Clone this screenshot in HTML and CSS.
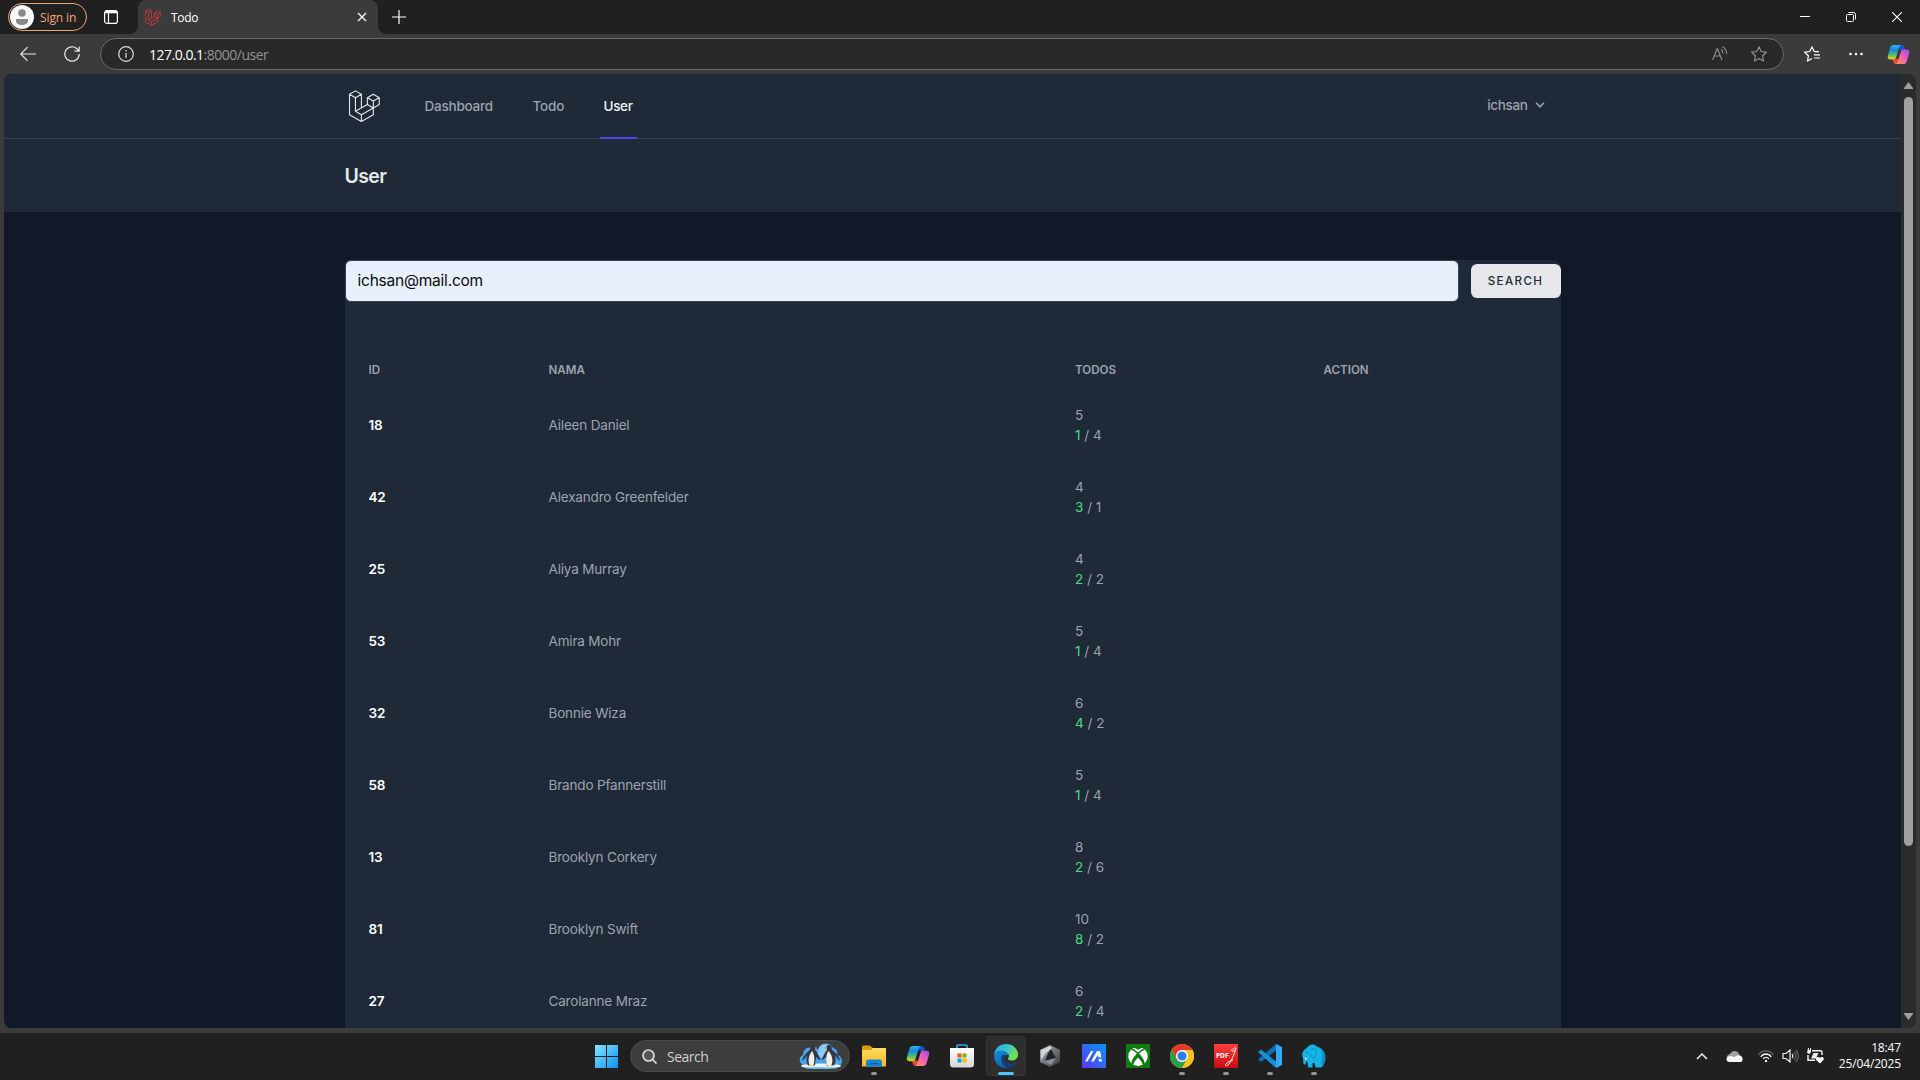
FILE: index.html
```html
<!DOCTYPE html>
<html lang="en">
<head>
<meta charset="utf-8">
<title>Todo</title>
<link rel="stylesheet" href="styles.css">
</head>
<body>
<svg class="defs" width="0" height="0" aria-hidden="true">
  <defs>
    <linearGradient id="cpA" x1="0" y1="0" x2="0" y2="1"><stop offset="0" stop-color="#22b4f5"/><stop offset=".35" stop-color="#1c87dc"/><stop offset=".65" stop-color="#43bd7c"/><stop offset="1" stop-color="#f8d000"/></linearGradient>
    <linearGradient id="cpB" x1="1" y1="0" x2="0" y2="1"><stop offset="0" stop-color="#a144ee"/><stop offset=".5" stop-color="#ee62ae"/><stop offset="1" stop-color="#ff9a57"/></linearGradient>
    <linearGradient id="win" gradientUnits="userSpaceOnUse" x1="0" y1="0" x2="23" y2="23"><stop offset="0" stop-color="#86e2ff"/><stop offset="1" stop-color="#0a93f5"/></linearGradient>
    <linearGradient id="folder" x1="0" y1="0" x2="0" y2="1"><stop offset="0" stop-color="#ffdc64"/><stop offset="1" stop-color="#f9b91e"/></linearGradient>
    <linearGradient id="bag" x1="0" y1="0" x2="0" y2="1"><stop offset="0" stop-color="#ffffff"/><stop offset="1" stop-color="#d6d6d6"/></linearGradient>
    <linearGradient id="edgeTop" x1="0" y1="0" x2="1" y2=".4"><stop offset="0" stop-color="#2aa6e4"/><stop offset=".55" stop-color="#35c5cf"/><stop offset="1" stop-color="#75e04b"/></linearGradient>
    <linearGradient id="edgeLow" x1="0" y1="0" x2="1" y2="1"><stop offset="0" stop-color="#168fe3"/><stop offset="1" stop-color="#0c4a8c"/></linearGradient>
    <linearGradient id="asus" x1="0" y1="1" x2="1" y2="0"><stop offset="0" stop-color="#5a35f6"/><stop offset="1" stop-color="#0898f8"/></linearGradient>
    <linearGradient id="pdf" x1="0" y1="0" x2="0" y2="1"><stop offset="0" stop-color="#ff3d42"/><stop offset="1" stop-color="#c80c10"/></linearGradient>
    <linearGradient id="steel" x1="0" y1="0" x2="1" y2="1"><stop offset="0" stop-color="#aeb2b8"/><stop offset="1" stop-color="#32363d"/></linearGradient>
    <symbol id="laravel" viewBox="0 0 50 52">
      <path fill="none" stroke="currentColor" stroke-linejoin="round" d="M.8 6.3 10.4.8 20 6.3 10.4 11.8ZM.8 6.3v32.9L20 50.2l19.2-11V28.3M10.4 11.8v22L20 39.4v10.8M20 6.3v22.1M10.4 33.8l19.2-11.1M20 39.4l19.2-11.1M29.6 11.8l9.6-5.5 9.6 5.5-9.6 5.5ZM29.6 11.8v10.9l9.6 5.6 9.6-5.6V11.8M39.2 17.3v11"/>
    </symbol>
    <symbol id="copilot" viewBox="0 0 24 22">
      <path fill="#1458c8" d="M10 1h5.500c1.500 0 2.200 1 2.700 2.400l1 3h-5z"/>
      <path fill="#e94a3c" d="M6 15.500h5.500l2 5.500H9.500c-1.700 0-2.300-1-2.700-2.500z"/>
      <path fill="url(#cpA)" d="M6.500 1H15c-1.200.2-1.800 1-2.200 2.400L9.500 14c-.5 1.500-1.300 2.200-3 2.200H3.300C1 16.200.3 14.500.9 12.300L3.300 4C4 1.800 5 1 6.500 1z"/>
      <path fill="url(#cpB)" d="M17.500 21H9c1.200-.2 1.800-1 2.200-2.400L14.500 8c.5-1.500 1.300-2.200 3-2.200h3.200c2.300 0 3 1.700 2.400 3.900L20.700 18c-.7 2.200-1.700 3-3.200 3z"/>
    </symbol>
  </defs>
</svg>

<div class="titlebar">
  <div class="signin">
    <svg width="24" height="24" viewBox="0 0 24 24"><circle cx="12" cy="12" r="12" fill="#f7f7f7"/><circle cx="12" cy="8" r="3.800" fill="#8a8a8a"/><path d="M6 14h12v1.500c0 3-2.500 4.500-6 4.500s-6-1.500-6-4.500z" fill="#8a8a8a"/></svg>
    <span>Sign in</span>
  </div>
  <svg class="workspaces" width="14" height="14" viewBox="0 0 14 14" fill="none" stroke="#fff" stroke-width="1.200"><rect x=".6" y=".6" width="12.800" height="12.800" rx="2.500"/><path d="M1 2h12" stroke-width="2.600"/><path d="M4.500 3v10"/></svg>
  <div class="tab">
    <svg class="favicon" width="16" height="17" stroke-width="3"><use href="#laravel"/></svg>
    <span class="tab-title">Todo</span>
    <svg width="10" height="10" viewBox="0 0 10 10" stroke="#fff" stroke-width="1.300"><path d="M1 1l8 8M9 1 1 9"/></svg>
  </div>
  <svg class="newtab" width="14" height="14" viewBox="0 0 14 14" stroke="#fff" stroke-width="1.200"><path d="M7 0v14M0 7h14"/></svg>
  <div class="window-controls">
    <svg width="10" height="10" viewBox="0 0 10 10" stroke="#fff"><path d="M0 4.500h10"/></svg>
    <svg width="10" height="10" viewBox="0 0 10 10" fill="none" stroke="#fff" stroke-width="1"><rect x=".5" y="2.500" width="7" height="7" rx="1"/><path d="M2.500.5H7.500a2 2 0 0 1 2 2V7.500"/></svg>
    <svg width="10" height="10" viewBox="0 0 10 10" stroke="#fff" stroke-width="1.100"><path d="M0 0l10 10M10 0 0 10"/></svg>
  </div>
</div>

<div class="toolbar">
  <svg class="back" width="16" height="16" viewBox="0 0 16 16" fill="none" stroke="#e8e8e8" stroke-width="1.200"><path d="M16 8H.8M7.500 1.200.8 8l6.700 6.800"/></svg>
  <svg class="reload" width="16" height="16" viewBox="0 0 16 16" fill="none" stroke="#e8e8e8" stroke-width="1.200"><path d="M15.200 8a7.200 7.200 0 1 1-2-5l1.700 2M15.200.5V5.200H10.500"/></svg>
  <div class="address">
    <svg width="16" height="16" viewBox="0 0 16 16" fill="none" stroke="#ddd" stroke-width="1.200"><circle cx="8" cy="8" r="7.300"/><path d="M8 7v5M8 4v1.500"/></svg>
    <span class="url">127.0.0.1<span class="url-path">:8000/user</span></span>
    <svg class="read-aloud" width="16" height="16" viewBox="0 0 16 16" fill="none" stroke="#8f8f8f" stroke-width="1.100"><path d="M.6 14 5.300 2.500 10 14M2.200 10h6.200M9.300 3.200c1 .8 1.600 2.200 1.700 4.300M10.500.8c2.500 1.200 4 3.700 4.200 7.200"/></svg>
    <svg width="16" height="16" viewBox="0 0 16 16" fill="none" stroke="#8f8f8f" stroke-width="1.200" stroke-linejoin="round"><path d="M8 .8l2.200 4.700 5.100.7-3.700 3.600.9 5.300L8 12.600l-4.500 2.500.9-5.300L.7 6.200l5.100-.7z"/></svg>
  </div>
  <svg class="favorites" width="16" height="16" viewBox="0 0 16 16" fill="none" stroke="#fff" stroke-width="1.200" stroke-linejoin="round"><path d="M15 5.700h-4.600L8 .9 5.700 5.500l-5 .7 3.700 3.600-.9 5.300L8 12.600M10 8.800h6M10 12h6"/></svg>
  <svg class="more" width="14" height="4" viewBox="0 0 14 4" fill="#fff"><circle cx="1.500" cy="2" r="1.300"/><circle cx="7" cy="2" r="1.300"/><circle cx="12.500" cy="2" r="1.300"/></svg>
  <svg width="23" height="21"><use href="#copilot"/></svg>
</div>

<div class="viewport">
  <div class="page">
    <nav class="nav">
      <div class="container nav-inner">
        <svg class="logo" width="31" height="33" stroke-width="1.800"><use href="#laravel"/></svg>
        <a class="nav-link nav-dashboard">Dashboard</a>
        <a class="nav-link nav-todo">Todo</a>
        <a class="nav-link nav-user active">User</a>
        <div class="account"><span>ichsan</span><svg width="10" height="6" viewBox="0 0 10 6" fill="none" stroke="#9ca3af" stroke-width="1.600"><path d="M1 .8l4 4 4-4"/></svg></div>
      </div>
    </nav>
    <header class="page-header"><div class="container"><h2>User</h2></div></header>
    <main class="container main">
      <div class="card">
        <form class="search-form">
          <div class="search-input">ichsan@mail.com</div>
          <div class="search-button">Search</div>
        </form>
        <table class="users">
          <thead><tr><th class="col-id">ID</th><th class="col-name">Nama</th><th class="col-todos">Todos</th><th>Action</th></tr></thead>
          <tbody>
            <tr><td class="id">18</td><td>Aileen Daniel</td><td><p>5</p><p><span class="done">1</span> / 4</p></td><td></td></tr>
            <tr><td class="id">42</td><td>Alexandro Greenfelder</td><td><p>4</p><p><span class="done">3</span> / 1</p></td><td></td></tr>
            <tr><td class="id">25</td><td>Aliya Murray</td><td><p>4</p><p><span class="done">2</span> / 2</p></td><td></td></tr>
            <tr><td class="id">53</td><td>Amira Mohr</td><td><p>5</p><p><span class="done">1</span> / 4</p></td><td></td></tr>
            <tr><td class="id">32</td><td>Bonnie Wiza</td><td><p>6</p><p><span class="done">4</span> / 2</p></td><td></td></tr>
            <tr><td class="id">58</td><td>Brando Pfannerstill</td><td><p>5</p><p><span class="done">1</span> / 4</p></td><td></td></tr>
            <tr><td class="id">13</td><td>Brooklyn Corkery</td><td><p>8</p><p><span class="done">2</span> / 6</p></td><td></td></tr>
            <tr><td class="id">81</td><td>Brooklyn Swift</td><td><p>10</p><p><span class="done">8</span> / 2</p></td><td></td></tr>
            <tr><td class="id">27</td><td>Carolanne Mraz</td><td><p>6</p><p><span class="done">2</span> / 4</p></td><td></td></tr>
          </tbody>
        </table>
      </div>
    </main>
  </div>
  <div class="scrollbar">
    <svg width="9" height="7" viewBox="0 0 9 7" fill="#9f9f9f"><path d="M4.500 0 9 6v1H0V6z"/></svg>
    <div class="thumb"></div>
    <svg class="down" width="9" height="7" viewBox="0 0 9 7" fill="#9f9f9f"><path d="M4.500 7 9 1V0H0v1z"/></svg>
  </div>
</div>

<div class="taskbar">
  <svg class="start" width="23" height="23" viewBox="0 0 23 23" fill="url(#win)"><path d="M0 0h11v11H0zM12 0h11v11H12zM0 12h11v11H0zM12 12h11v11H12z"/></svg>
  <div class="task-search">
    <svg width="15" height="15" viewBox="0 0 15 15" fill="none" stroke="#d8d8d8" stroke-width="1.700"><circle cx="6.500" cy="6.500" r="5.500" fill="#55565a"/><path d="M10.500 10.500l4 4"/></svg>
    <span>Search</span>
    <svg class="penguins" width="44" height="26" viewBox="0 0 44 26">
      <path fill="#4aa3ec" d="M5 23C0 21-1 14 4 12c0-5 4-9 9-7l6 1C22-1 31-1 34 5c4 1 5 4 4 7 6 1 7 9 1 12z"/>
      <path fill="#8ccbf6" d="M20 6c1-5 9-7 12-1l-4 6-5 5-4-5z"/>
      <ellipse cx="22" cy="23" rx="20" ry="2.600" fill="#e8f4fb"/><ellipse cx="22" cy="25" rx="16" ry="1" fill="#73bce4"/>
      <path fill="#303843" d="M11.500 3.500c1-2 4.500-2 5 .5l-.5 3c3 3 3.500 7 5.500 9l-1 1-3.500-3-1 8H8.500C7 18 7.500 14 8 12c-2 3-3 5-5 6 1-5 4-8 8-11z"/>
      <path fill="#f0efea" d="M13 8c2.500 3 3 9 1.500 14h-4c-2-5-.5-10 2.500-14z"/><path fill="#d98040" d="M16 4l3 1-3 1z"/>
      <path fill="#303843" d="M32.500 3.500c-1-2-4.500-2-5 .5l.5 3c-3 3-3.500 7-5.500 9l1 1 3.500-3 1 8h7.500c1.500-4 1-8 .5-10 2 3 3 5 5 6-1-5-4-8-8-11z"/>
      <path fill="#f0efea" d="M29.500 8c-2.500 3-3 9-1.500 14h4.500c2-5 .5-10-3-14z"/><path fill="#d98040" d="M28 4l-3 1 3 1z"/>
      <path fill="#d8a650" d="M9 22h3v1H9zM13 22h3v1h-3zM27 22h3v1h-3zM32 22h3v1h-3z"/>
    </svg>
  </div>
  <div class="apps">
    <div class="app running"><svg width="24" height="24" viewBox="0 0 24 24"><path fill="#d99a0b" d="M0 3a1.500 1.500 0 0 1 1.500-1.500H8L10.500 4H24v6H0z"/><path fill="url(#folder)" d="M0 6h9l2-2h13v18.500H0z"/><path fill="#1587d6" d="M4 22.500V18a2.500 2.500 0 0 1 2.500-2.500h11A2.500 2.500 0 0 1 20 18v4.500z"/><path fill="#0860a6" d="M8 19h8v1.500H8z"/></svg></div>
    <div class="app"><svg width="24" height="22"><use href="#copilot"/></svg></div>
    <div class="app"><svg width="24" height="24" viewBox="0 0 24 24"><path fill="none" stroke="#27aee8" stroke-width="1.700" d="M7 5V2a1 1 0 0 1 1-1h8a1 1 0 0 1 1 1v3"/><path fill="url(#bag)" d="M0 4h24v16a3.500 3.500 0 0 1-3.500 3.500h-17A3.500 3.500 0 0 1 0 20z"/><path fill="#f15022" d="M7.500 9.500h4v4h-4z"/><path fill="#7eb900" d="M12.500 9.500h4v4h-4z"/><path fill="#00a3ee" d="M7.500 14.500h4v4h-4z"/><path fill="#ffb800" d="M12.500 14.500h4v4h-4z"/></svg></div>
    <div class="app running active"><svg width="24" height="24" viewBox="0 0 24 24"><path fill="url(#edgeLow)" d="M.2 11C.5 7 4 6 7 6c5 0 8 3 7.500 5.500C13 10 9 12 9.500 15c.5 4 5 5.500 9 5l3.700-1.200C20 22 16 24 12 24 5 24-.3 18 .2 11z"/><path fill="#123f7b" d="M7.500 13c-1 5 2 9 6 10.800 4-.2 7.500-2.800 8.700-5C17 21 10 20 9.500 15c-.2-1.500.8-3 2-3.800-1.500-.8-3.500-.2-4 1.800z"/><path fill="url(#edgeTop)" d="M.3 10C1 4 6 0 12 0c7 0 12 5 12 10.500 0 4-3 6-6.500 6-3 0-4-1.200-3.500-2 1.500-2 1-4-.5-5.500C10 5.500 3 5.500.3 10z"/></svg></div>
    <div class="app"><svg width="22" height="24" viewBox="0 0 22 24"><path fill="url(#steel)" d="M11 1l10 5v12l-10 5L1 18V6z"/><path fill="#202329" d="M12 5l5 9-11 4c1-5 3-9 6-13z"/><path fill="#d0d2d6" d="M2 6l9-4 2 2-6 5-5 7z"/><path fill="#8b9098" d="M5 17l12-3-5 7z"/></svg></div>
    <div class="app"><svg width="24" height="24" viewBox="0 0 24 24"><path fill="url(#asus)" d="M0 0h24v24H0z"/><path fill="#fff" d="M3 17.500 9 7h2.500l-6 10.500zM9 17.500 15 7h3l1.500 6.500h-3L15.700 11l-4 6.500zM16.500 15h3l.5 2.500h-3z"/></svg></div>
    <div class="app"><svg width="24" height="24" viewBox="0 0 24 24"><rect width="24" height="24" rx="1" fill="#107c10"/><circle cx="12" cy="12.300" r="9.700" fill="#fff"/><path fill="#107c10" d="M5.500 4.500C8 3.500 10 4.500 12 6c2-1.500 4-2.500 6.500-1.500L17 1.500H7zM12 9c4 3.500 7 7.500 6.500 11l-1.700 1c-.4-2.500-2.300-5-4.800-7.500-2.500 2.500-4.400 5-4.800 7.500l-1.700-1C5 16.500 8 12.500 12 9z"/><path fill="none" stroke="#107c10" stroke-width="1.600" d="M5.500 5C9 6 15 11 18 20M18.500 5C15 6 9 11 6 20"/></svg></div>
    <div class="app running"><svg width="24" height="24" viewBox="0 0 24 24"><circle cx="12" cy="12" r="12" fill="#fbc21c"/><path fill="#2a9f48" d="M1.600 6A12 12 0 0 0 12 24l5.200-9H6.800z"/><path fill="#e33b2e" d="M1.600 6 6.800 15 12 6h10.400A12 12 0 0 0 1.600 6z"/><path fill="#fbc21c" d="M12 24l5.200-9V6h5.200A12 12 0 0 1 12 24z"/><circle cx="12" cy="12" r="6" fill="#fff"/><circle cx="12" cy="12" r="4.600" fill="#2b7de9"/></svg></div>
    <div class="app running"><svg width="24" height="24" viewBox="0 0 24 24"><path fill="url(#pdf)" d="M0 0h24v24H0z"/><text x="2" y="14" class="pdf-label">PDF</text><path fill="none" stroke="#fff" stroke-width=".9" d="M17 7c2-3 4-3.500 5-2.500-.5 2-2.500 3-4 2.500m3.500-1.500C20 10 18 17 14 21c-2 1.500-3.500.5-2-1 1.500-2 4-3 7-4"/></svg></div>
    <div class="app running"><svg width="24" height="24" viewBox="0 0 24 24"><path fill="#0873bd" d="M18 0v6.500L3 18 0 15.500z"/><path fill="#158fd8" d="M0 8l3-2.500L18 17.500V24z"/><path fill="#31a9f3" d="M18 0l6 3v18l-6 3z"/></svg></div>
    <div class="app running"><svg width="24" height="24" viewBox="0 0 24 24"><path fill="#0c94c8" d="M12 2c7 0 12 6 11.500 12 0 3-.8 5-2 7l-1 2h-5V2z"/><path fill="#16b3e6" d="M5 4C7 0 13-1 15 3c5 1 6 7 5 11l-1 9.500h-5.500L12.500 19h-2v4.500H6L5.500 18l-1.500-.5-.5 3H1.500L1 14C-.5 11 0 6 5 4z"/><path fill="none" stroke="#0a8fc4" stroke-width="1" d="M9 5c5-2 8 4 3 9-2 0-3-2-3-4"/><path fill="#fff" d="M2.500 13l3 2-2 .5z"/><circle cx="5" cy="9" r=".8" fill="#075a80"/></svg></div>
  </div>
  <div class="tray">
    <svg class="tray-up" width="12" height="7" viewBox="0 0 12 7" fill="none" stroke="#eee" stroke-width="1.500"><path d="M1 6l5-5 5 5"/></svg>
    <svg class="cloud" width="17" height="11" viewBox="0 0 17 11"><path fill="#a0a0a0" d="M1 6C1 4 3 3 4 3c2-4 8-4 9.500 1L9 8z"/><path fill="#f5f5f5" d="M3.500 11C0 11-.5 7 2 5.500c2-1 4-.5 6 .8 2-1.500 4-2.300 6-1.800 3.500 1 3.500 6.500 0 6.500z"/></svg>
    <svg class="wifi" width="16" height="13" viewBox="0 0 16 13" fill="none" stroke="#eee" stroke-width="1.300"><path stroke="#666" d="M.5 5C4-.5 12-.5 15.500 5"/><path d="M2.800 7c2.500-4 8-4 10.400 0M5 9c1.600-2.300 4.500-2.300 6 0"/><circle cx="8" cy="11" r="1.200" fill="#eee" stroke="none"/></svg>
    <svg class="volume" width="17" height="14" viewBox="0 0 17 14" fill="none" stroke="#eee" stroke-width="1.200"><path d="M1 4.500h3L8 1v12L4 9.500H1zM10 5c1 1.200 1 2.800 0 4"/><path stroke="#666" d="M12 3c2.500 2.500 2.500 5.500 0 8M14 1c3.200 3.500 3.200 8.500 0 12"/></svg>
    <svg width="18" height="16" viewBox="0 0 18 16"><path fill="none" stroke="#eee" stroke-width="1.500" d="M6 2.800h9l1 1V7M2 7v5.200h7"/><path fill="#eee" d="M2 0h1v2h1V0h1v4L3.500 6 1 5zM5 10.500l2.500-5.500h5L10 10.500z"/><path fill="#fff" d="M14 15.500l-4-3.700c-1-3 3-3.500 4-1.800 1-1.700 5-1 3.500 1.800z"/></svg>
    <div class="clock"><div>18:47</div><div>25/04/2025</div></div>
  </div>
</div>
</body>
</html>
```
FILE: styles.css
```css
* { box-sizing: border-box; }
body {
  margin: 0;
  width: 1920px;
  height: 1080px;
  overflow: hidden;
  display: flex;
  flex-direction: column;
  background: #3b3b3b;
  color: #fff;
  font-family: "Open Sans", "Noto Sans", sans-serif;
}
svg { display: block; flex: none; }
.defs { position: absolute; }
p, h2 { margin: 0; }

/* Browser chrome */
.titlebar { flex: none; height: 34px; background: #202020; display: flex; align-items: center; }
.signin {
  width: 79px; height: 28px; margin-left: 8px; padding-left: 1px;
  display: flex; align-items: center; gap: 6px;
  border: 1px solid #f0a46c; border-radius: 14px;
  color: #f4a76e; font-size: 12px; letter-spacing: -.1px; white-space: nowrap;
}
.workspaces { margin-left: 17px; }
.tab {
  width: 240px; height: 34px; margin-left: 20px; padding: 0 11px 0 7px;
  display: flex; align-items: center;
  background: #3b3b3b; border-radius: 8px 8px 0 0; position: relative;
  font-size: 12px; letter-spacing: -.3px;
}
.tab::before, .tab::after {
  content: ""; position: absolute; bottom: 0; width: 8px; height: 8px;
}
.tab::before { left: -8px; background: radial-gradient(circle at 0 0, #202020 7.500px, #3b3b3b 8px); }
.tab::after { right: -8px; background: radial-gradient(circle at 100% 0, #202020 7.500px, #3b3b3b 8px); }
.favicon { color: #c23a34; }
.tab-title { flex: 1; margin-left: 10px; }
.newtab { margin-left: 14px; }
.window-controls { margin-left: auto; margin-right: 18px; display: flex; gap: 36px; }

.toolbar { flex: none; height: 40px; display: flex; align-items: center; }
.back { margin-left: 20px; }
.reload { margin-left: 28px; }
.address {
  width: 1684px; height: 32px; margin-left: 20px; padding: 0 16px 0 17px;
  display: flex; align-items: center;
  background: #292929; border: 1px solid #6a6a6a; border-radius: 16px;
}
.url { flex: 1; margin-left: 15px; font-size: 14px; letter-spacing: -.5px; }
.url-path { color: #929292; }
.read-aloud { margin-right: 23px; }
.favorites { margin-left: 20px; }
.more { margin: 0 24px 0 29px; }

.viewport {
  flex: none; width: 1912px; height: 954px; margin-left: 4px;
  display: flex; overflow: hidden; border-radius: 8px; background: #2b2b2b;
}
.scrollbar { width: 15px; padding: 8px 3px 8px; display: flex; flex-direction: column; align-items: center; }
.thumb { width: 9px; height: 749px; margin-top: 8px; border-radius: 5px; background: #9f9f9f; }
.down { margin-top: auto; }

/* Application page */
.page {
  width: 1897px; height: 954px; overflow: hidden; background: #111827;
  font-family: Inter, "Open Sans", sans-serif; color: #9ca3af;
}
.container { width: 1280px; margin: 0 auto; padding: 0 32px; }
.nav { height: 65px; background: #1f2937; border-bottom: 1px solid #374151; }
.nav-inner { display: flex; align-items: center; height: 65px; font-size: 13.500px; font-weight: 500; }
.logo { margin-left: 4px; color: #e5e7eb; }
.nav-link { height: 65px; padding: 0 4px; line-height: 64px; border-bottom: 2px solid transparent; white-space: nowrap; }
.nav-dashboard { width: 76px; margin-left: 41px; letter-spacing: -.22px; }
.nav-todo { width: 39px; margin-left: 32px; letter-spacing: -.2px; }
.nav-user { width: 37px; margin-left: 32px; letter-spacing: -.35px; }
.nav-link.active { color: #f3f4f6; border-color: #4f46e5; }
.account { display: flex; align-items: center; gap: 7px; margin-left: auto; margin-right: 16px; padding-bottom: 3px; letter-spacing: -.35px; }
.page-header { height: 73px; padding: 24px 0; background: #1f2937; }
.page-header h2 { font-size: 19.500px; line-height: 26px; font-weight: 600; color: #e5e7eb; letter-spacing: -.65px; }
.main { padding-top: 48px; }
.card { height: 900px; background: #1f2937; border-radius: 8px; }
.search-form { height: 42px; display: flex; align-items: center; gap: 12px; margin-bottom: 47px; }
.search-input {
  flex: 1; height: 42px; padding: 0 12px; line-height: 40px;
  border: 1px solid #374151; border-radius: 6px; background: #e8f0fe;
  color: #0b0b0b; font-size: 15.500px; letter-spacing: -.22px;
}
.search-button {
  width: 90px; height: 34px; line-height: 34px; text-align: center;
  background: #e5e7eb; border-radius: 6px; color: #1f2937;
  font-size: 11.600px; font-weight: 500; letter-spacing: 1.400px; text-transform: uppercase;
}
.users { width: 100%; table-layout: fixed; border-collapse: collapse; text-align: left; font-size: 13.500px; line-height: 20px; }
.users th { height: 40px; padding: 2px 24px 0; font-size: 11.600px; line-height: 16px; font-weight: 600; text-transform: uppercase; }
.users td { height: 72px; padding: 16px 24px; letter-spacing: -.17px; }
.users .col-id { width: 180px; }
.users .col-name { width: 526.500px; }
.users .col-todos { width: 248.500px; }
.users .id { color: #fff; font-weight: 600; }
.users p { letter-spacing: 0; }
.done { color: #4ade80; }

/* Taskbar */
.taskbar { height: 47px; margin-top: 5px; padding-bottom: 1px; background: #202020; display: flex; align-items: center; }
.start { margin-left: 595px; }
.task-search {
  width: 220px; height: 32px; margin-left: 12px; padding: 0 6px 0 11px;
  display: flex; align-items: center;
  border: 1px solid #4b4b4b; border-radius: 16px; background: #3c3d3d;
  font-size: 14px; letter-spacing: -.5px; color: #d0d0d0;
}
.task-search span { margin-left: 10px; flex: 1; }
.apps { display: flex; gap: 4px; margin-left: 4px; }
.app { width: 40px; height: 40px; display: flex; align-items: center; justify-content: center; position: relative; border-radius: 4px; }
.app.running::after { content: ""; position: absolute; left: 17px; bottom: 1px; width: 6px; height: 3px; border-radius: 2px; background: #969696; }
.app.active { background: #2e2e2e; box-shadow: inset 0 0 0 1px #353535; }
.app.active.running::after { left: 12px; width: 16px; background: #4cc2ff; }
.pdf-label { font-size: 6.500px; font-weight: 700; fill: #fff; }
.tray { margin-left: auto; margin-right: 19px; display: flex; align-items: center; }
.tray-up { margin-right: 18px; }
.cloud { margin-right: 15px; }
.wifi { margin-right: 8px; }
.volume { margin-right: 7px; }
.clock { width: 77px; font-size: 12px; line-height: 16px; letter-spacing: -.15px; text-align: right; white-space: nowrap; }
```
